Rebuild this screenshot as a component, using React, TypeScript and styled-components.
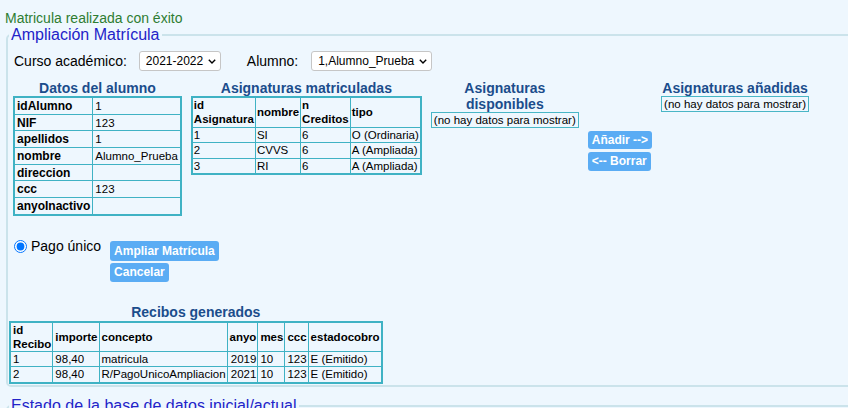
import React from 'react';
import styled, { createGlobalStyle } from 'styled-components';

const Global = createGlobalStyle`
  html, body { margin: 0; padding: 0; background: #eef7fe; overflow: hidden; }
  body { font-family: "Liberation Sans", Arial, sans-serif; color: #000; }
`;

const Message = styled.div`
  color: #2e7d32;
  font-size: 14px;
  line-height: 16px;
  padding: 10px 0 0 5px;
`;

const Fieldset = styled.fieldset<{ $mt?: number; $minH?: number }>`
  margin: ${(p) => p.$mt ?? 0}px -10px 0 6px;
  padding: 0 0 1px 1px;
  border: 2px solid #cbe3eb;
  border-radius: 5px;
  min-width: 0;
  min-height: ${(p) => p.$minH ?? 0}px;
`;

const Legend = styled.legend`
  color: #2323c8;
  font-size: 16px;
  line-height: 18px;
  padding: 0 2px;
`;

const FilterRow = styled.div`
  display: flex;
  align-items: center;
  height: 22px;
  margin: 6px 0 0 5px;
  font-size: 14px;
`;

const Label = styled.span<{ $ml?: number }>`
  margin-left: ${(p) => p.$ml ?? 0}px;
`;

const SelectWrap = styled.span<{ $ml: number }>`
  position: relative;
  display: inline-flex;
  margin-left: ${(p) => p.$ml}px;
`;

const Select = styled.select`
  appearance: none;
  -webkit-appearance: none;
  height: 20px;
  border: 1px solid #c6c6c6;
  border-radius: 3px;
  background: #fff;
  font-family: "Liberation Sans", Arial, sans-serif;
  font-size: 12px;
  color: #000;
  padding: 0 16px 0 6px;
  margin: 0;
`;

const Chevron = styled.svg`
  position: absolute;
  right: 5px;
  top: 8px;
  pointer-events: none;
`;

const MainRow = styled.div`
  display: flex;
  align-items: flex-start;
  gap: 9px;
  margin: 8px 0 0 4px;
`;

const Column = styled.div<{ $shrink?: boolean }>`
  display: flex;
  flex-direction: column;
  align-items: center;
  width: ${(p) => (p.$shrink ? 'min-content' : 'auto')};
`;

const Heading = styled.div<{ $lh?: number }>`
  color: #1b4d8c;
  font-weight: bold;
  font-size: 14px;
  line-height: ${(p) => p.$lh ?? 16}px;
  text-align: center;
`;

const Table = styled.table<{ $thSize: number; $padT: number; $padB: number; $padR: number; $padL: number }>`
  border-collapse: collapse;
  border: 2px solid #3fb2c4;
  font-size: 11.5px;
  line-height: 14px;

  th, td {
    border: 1px solid #3fb2c4;
    padding: ${(p) => p.$padT}px ${(p) => p.$padR}px ${(p) => p.$padB}px ${(p) => p.$padL}px;
    vertical-align: middle;
    text-align: left;
    white-space: nowrap;
  }
  th { font-weight: bold; font-size: ${(p) => p.$thSize}px; }
`;

const Cell = styled.td<{ $right?: boolean }>`
  && { text-align: ${(p) => (p.$right ? 'right' : 'left')}; }
`;

const EmptyBox = styled.div`
  border: 1px solid #49b6c6;
  padding: 0 2px;
  font-size: 11.5px;
  line-height: 14px;
  white-space: nowrap;
`;

const ButtonStack = styled.div<{ $gap: number; $mt: number; $ml?: number; $center?: boolean }>`
  display: flex;
  flex-direction: column;
  align-items: flex-start;
  gap: ${(p) => p.$gap}px;
  margin-top: ${(p) => p.$mt}px;
  margin-left: ${(p) => p.$ml ?? 0}px;
  align-self: ${(p) => (p.$center ? 'center' : 'flex-start')};
`;

const Button = styled.button<{ $h?: number }>`
  background: #5aacf4;
  color: #fff;
  font-family: "Liberation Sans", Arial, sans-serif;
  font-weight: bold;
  font-size: 12px;
  line-height: ${(p) => (p.$h ?? 19) - 4}px;
  padding: 2px 4px;
  border: none;
  border-radius: 3px;
  margin: 0;
`;

const PayRow = styled.div`
  display: flex;
  align-items: flex-start;
  margin-top: 23px;
`;

const PayOption = styled.label`
  display: flex;
  align-items: center;
  height: 15px;
  font-size: 14px;
`;

const Radio = styled.input`
  width: 13px;
  height: 13px;
  margin: 0 4px 0 5px;
`;

const Recibos = styled.div`
  display: inline-flex;
  flex-direction: column;
  align-items: center;
  margin-top: 22px;
`;

const ChevronIcon = () => (
  <Chevron width="8" height="5" viewBox="0 0 8 5">
    <path d="M0.8 0.8 L4 4 L7.2 0.8" fill="none" stroke="#000" strokeWidth="1.4" />
  </Chevron>
);

const datos: [string, string][] = [
  ['idAlumno', '1'],
  ['NIF', '123'],
  ['apellidos', '1'],
  ['nombre', 'Alumno_Prueba'],
  ['direccion', ''],
  ['ccc', '123'],
  ['anyoInactivo', ''],
];

const matriculadas = [
  ['1', 'SI', '6', 'O (Ordinaria)'],
  ['2', 'CVVS', '6', 'A (Ampliada)'],
  ['3', 'RI', '6', 'A (Ampliada)'],
];

const recibos = [
  ['1', '98,40', 'matricula', '2019', '10', '123', 'E (Emitido)'],
  ['2', '98,40', 'R/PagoUnicoAmpliacion', '2021', '10', '123', 'E (Emitido)'],
];

export default function App() {
  return (
    <>
      <Global />
      <Message>Matricula realizada con éxito</Message>
      <Fieldset>
        <Legend>Ampliación Matrícula</Legend>
        <FilterRow>
          <Label>Curso académico:</Label>
          <SelectWrap $ml={12}>
            <Select defaultValue="2021-2022">
              <option>2021-2022</option>
            </Select>
            <ChevronIcon />
          </SelectWrap>
          <Label $ml={26}>Alumno:</Label>
          <SelectWrap $ml={13}>
            <Select defaultValue="1,Alumno_Prueba">
              <option>1,Alumno_Prueba</option>
            </Select>
            <ChevronIcon />
          </SelectWrap>
        </FilterRow>

        <MainRow>
          <Column>
            <Heading>Datos del alumno</Heading>
            <Table $thSize={12} $padT={1} $padB={0.7} $padR={2} $padL={2}>
              <tbody>
                {datos.map(([k, v]) => (
                  <tr key={k}>
                    <th>{k}</th>
                    <Cell>{v}</Cell>
                  </tr>
                ))}
              </tbody>
            </Table>
          </Column>

          <Column>
            <Heading>Asignaturas matriculadas</Heading>
            <Table $thSize={11.5} $padT={0} $padB={0.5} $padR={1} $padL={1}>
              <tbody>
                <tr>
                  <th>id<br />Asignatura</th>
                  <th>nombre</th>
                  <th>n<br />Creditos</th>
                  <th>tipo</th>
                </tr>
                {matriculadas.map((r) => (
                  <tr key={r[0]}>
                    {r.map((c, i) => (
                      <Cell key={i}>{c}</Cell>
                    ))}
                  </tr>
                ))}
              </tbody>
            </Table>
          </Column>

          <Column $shrink>
            <Heading>Asignaturas disponibles</Heading>
            <EmptyBox>(no hay datos para mostrar)</EmptyBox>
          </Column>

          <ButtonStack $gap={3} $mt={6} $center>
            <Button $h={18}>Añadir --&gt;</Button>
            <Button>&lt;-- Borrar</Button>
          </ButtonStack>

          <Column $shrink>
            <Heading>Asignaturas añadidas</Heading>
            <EmptyBox>(no hay datos para mostrar)</EmptyBox>
          </Column>
        </MainRow>

        <PayRow>
          <PayOption>
            <Radio type="radio" name="pago" defaultChecked />
            Pago único
          </PayOption>
          <ButtonStack $gap={2} $mt={2} $ml={9}>
            <Button $h={20}>Ampliar Matrícula</Button>
            <Button>Cancelar</Button>
          </ButtonStack>
        </PayRow>

        <Recibos>
          <Heading $lh={17}>Recibos generados</Heading>
          <Table $thSize={11.5} $padT={0} $padB={0.3} $padR={1} $padL={2}>
            <tbody>
              <tr>
                <th>id<br />Recibo</th>
                <th>importe</th>
                <th>concepto</th>
                <th>anyo</th>
                <th>mes</th>
                <th>ccc</th>
                <th>estadocobro</th>
              </tr>
              {recibos.map((r) => (
                <tr key={r[0]}>
                  {r.map((c, i) => (
                    <Cell key={i} $right={i === 3 || i === 5}>{c}</Cell>
                  ))}
                </tr>
              ))}
            </tbody>
          </Table>
        </Recibos>
      </Fieldset>
      <Fieldset $mt={10} $minH={60}>
        <Legend>Estado de la base de datos inicial/actual</Legend>
      </Fieldset>
    </>
  );
}
